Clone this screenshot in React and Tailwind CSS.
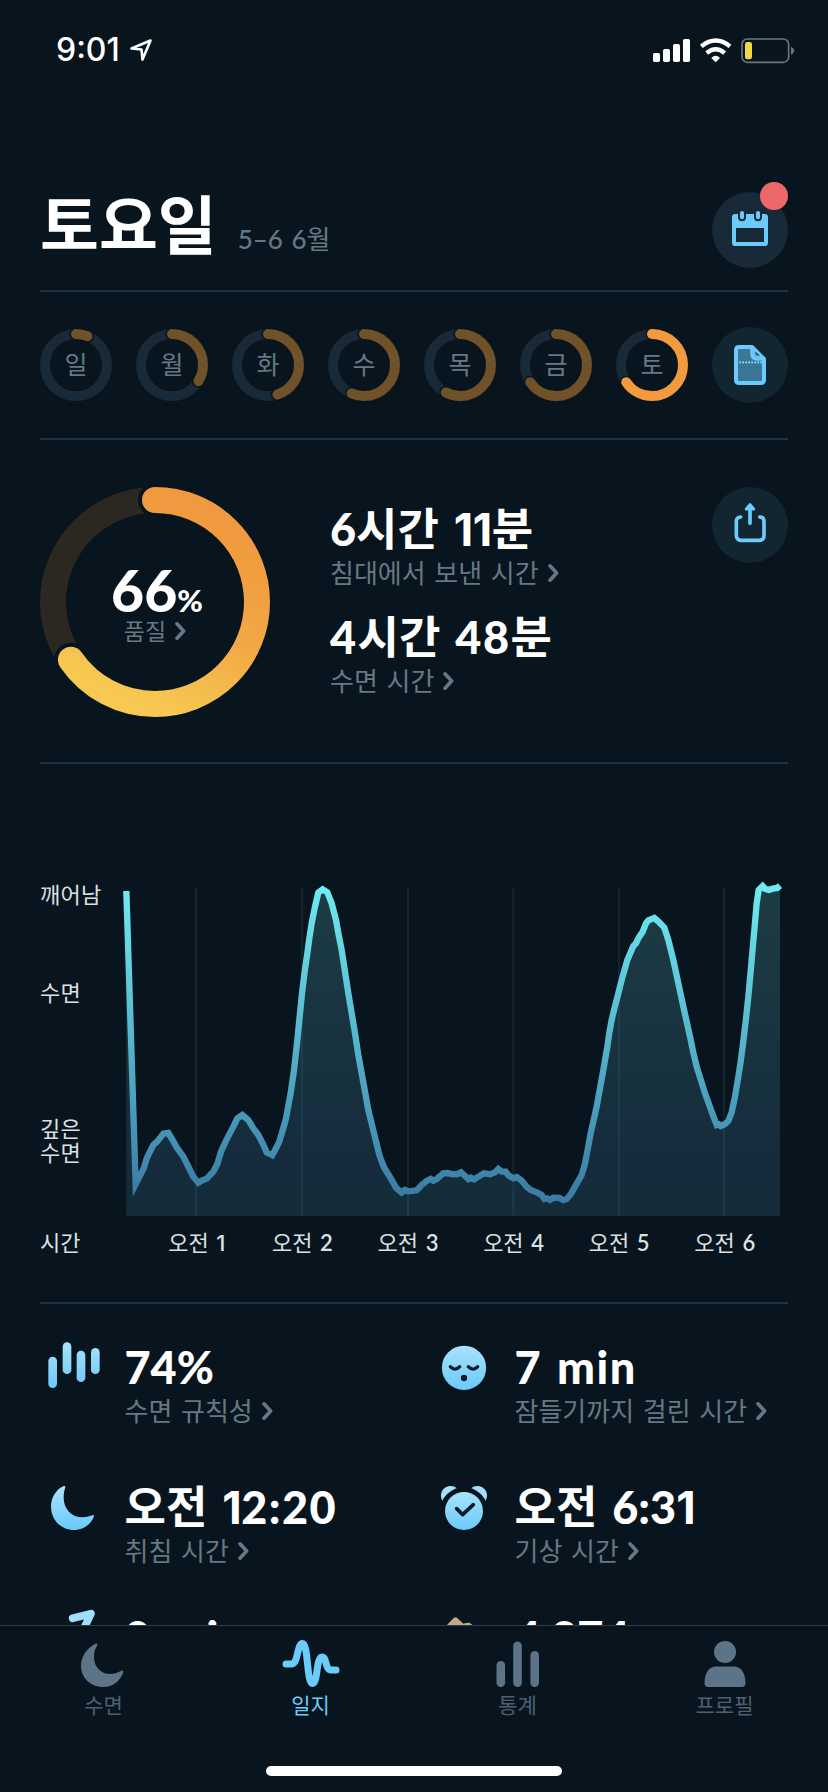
import React from 'react';

const CURVE =
  '319,93 347,972 371,925 381,893 400,855 412,844 430,821 445,819 458,840 470,862 490,890 510,930 520,950 535,968 545,962 560,956 580,935 592,912 603,875 620,838 640,800 652,775 667,765 685,780 700,805 715,825 728,850 740,877 757,885 768,865 778,845 797,780 812,700 822,630 830,560 838,480 846,400 854,335 862,280 868,235 875,190 885,140 895,98 908,88 922,97 935,130 948,180 956,225 965,270 975,335 985,400 995,460 1005,520 1015,585 1025,640 1035,695 1045,750 1062,820 1078,885 1092,922 1108,948 1118,965 1128,983 1145,998 1155,990 ' +
  '1165,994 1190,991 1205,975 1220,963 1232,957 1240,962 1250,957 1270,940 1282,939 1295,942 1310,943 1323,937 1333,946 1345,957 1352,953 1362,958 1375,950 1392,940 1410,943 1425,937 1435,927 1445,935 1457,935 1465,946 1480,955 1490,951 1505,962 1520,980 1532,990 1550,997 1565,1005 1573,1017 1582,1015 1590,1020 1600,1013 1618,1014 1630,1020 1640,1017 1652,1003 1665,980 1685,945 1694,915 1700,885 1712,820 1721,780 1730,740 1740,685 1750,630 1762,560 1768,518 1775,480 1782,450 1790,420 1805,360 1822,300 1840,258 1848,250 1855,235 1868,215 1878,190 1885,181 1903,174 1917,186 1933,203 1945,240 1960,300 1975,370 1990,440 2010,530 2020,578 2030,620 2042,658 2055,700 2075,755 2090,795 2096,793 2102,798 2115,792 2125,783 2135,757 2145,710 2155,650 2162,605 2168,560 2177,485 2185,410 2195,300 2203,210 2210,130 2216,90 2228,78 2236,87 2247,90 2258,86 2272,84 2280,77';

function Ring({ size, stroke, gap, value, color, track, children }) {
  const r = (size - stroke) / 2;
  const c = 2 * Math.PI * r;
  const mid = size / 2;
  const arc = {
    cx: mid,
    cy: mid,
    r,
    fill: 'none',
    strokeLinecap: 'round',
    strokeDasharray: `${(c * value) / 100} ${c}`,
    transform: `rotate(-90 ${mid} ${mid})`,
  };
  return (
    <div className="grid shrink-0 place-items-center">
      <svg width={size} height={size} className="col-start-1 row-start-1 overflow-visible">
        <defs>
          {/* Runs in the arc's rotated frame: +x points up, +y points right. */}
          <linearGradient id="warm" gradientUnits="userSpaceOnUse" x1="210" y1="145" x2="35" y2="60">
            <stop offset="0" stopColor="#f1993e" />
            <stop offset="0.5" stopColor="#f2a845" />
            <stop offset="1" stopColor="#f7c952" />
          </linearGradient>
        </defs>
        <circle cx={mid} cy={mid} r={r} fill="none" stroke={track} strokeWidth={stroke} />
        <circle {...arc} stroke="#08151e" strokeWidth={stroke + gap * 2} />
        <circle {...arc} stroke={color} strokeWidth={stroke} />
      </svg>
      <div className="col-start-1 row-start-1">{children}</div>
    </div>
  );
}

function Chevron() {
  return (
    <svg width="11" height="20" viewBox="0 0 11 20" className="shrink-0" fill="none" stroke="#647985" strokeWidth="3.6" strokeLinecap="round" strokeLinejoin="round">
      <path d="M2 2.8 8.6 10 2 17.2" />
    </svg>
  );
}

// Latin runs are set heavier than Hangul, and "1" takes a face without a foot.
function Value({ text, wide }) {
  return text.split(/(1+|[^가-힣\s1]+)/).filter(Boolean).map((run, i) => {
    if (run[0] === '1') return <span key={i} className="font-['Inter'] font-bold tracking-[-0.5px]">{run}</span>;
    if (/[가-힣\s]/.test(run)) return <span key={i} className="font-bold">{run}</span>;
    return <span key={i} className={wide ? 'font-black tracking-[1.5px]' : 'font-black'}>{run}</span>;
  });
}

function Metric({ value, label, wide }) {
  return (
    <div>
      <div className="h-[54px] text-[45px] leading-[54px] font-bold whitespace-nowrap [word-spacing:4px] text-white">
        <Value text={value} wide={wide} />
      </div>
      <div className="mt-px flex items-center gap-[9px] text-[26px] leading-8 whitespace-nowrap [word-spacing:2px] text-[#647985]">
        <span>{label}</span>
        {label && <Chevron />}
      </div>
    </div>
  );
}

const cool = 'url(#cool)';

function StatIcon({ children, box }) {
  return (
    <svg width="60" height="60" viewBox={box} className="shrink-0">
      <defs>
        <linearGradient id="cool" x1="0" y1="0" x2="0" y2="1">
          <stop offset="0" stopColor="#a9e3fc" />
          <stop offset="1" stopColor="#6ac9f9" />
        </linearGradient>
        <linearGradient id="coolBars" gradientUnits="userSpaceOnUse" x1="0" y1="66" x2="0" y2="205">
          <stop offset="0" stopColor="#a9e3fc" />
          <stop offset="1" stopColor="#6ac9f9" />
        </linearGradient>
      </defs>
      {children}
    </svg>
  );
}

const stats = [
  {
    value: '74%',
    label: '수면 규칙성',
    icon: (
      <StatIcon box="72 48 180 180">
        <g fill="url(#coolBars)">
          <rect x="85" y="110" width="26" height="94" rx="13" />
          <rect x="128" y="67" width="26" height="95" rx="13" />
          <rect x="170" y="92" width="26" height="94" rx="13" />
          <rect x="213" y="84" width="26" height="78" rx="13" />
        </g>
      </StatIcon>
    ),
  },
  {
    value: '7 min',
    wide: true,
    label: '잠들기까지 걸린 시간',
    icon: (
      <StatIcon box="42 48 180 180">
        <circle cx="132" cy="143.500" r="66.500" fill={cool} />
        <g fill="none" stroke="#0a1b27" strokeWidth="10" strokeLinecap="round">
          <path d="M91 140q14 15 28 0M145 140q14 15 28 0" />
        </g>
        <circle cx="132" cy="174" r="9.500" fill="#0a1b27" />
      </StatIcon>
    ),
  },
  {
    value: '오전 12:20',
    wide: true,
    label: '취침 시간',
    icon: (
      <StatIcon box="72 468 180 180">
        <path fill={cool} d="M131 498C108 508 93 533 93 560C93 599 123 630 162 630C190 630 215 612 222 588C223 585 220 584 217 586C207 590 197 592 188 592C154 592 131 566 131 533C131 520 133 510 136 502C137 499 134 497 131 498Z" />
      </StatIcon>
    ),
  },
  {
    value: '오전 6:31',
    label: '기상 시간',
    icon: (
      <StatIcon box="42 468 180 180">
        <path fill="#a4e0fb" d="M67 542C60 528 62 512 75 503C87 495 102 497 110 505C93 511 76 524 67 542ZM197 542C204 528 202 512 189 503C177 495 162 497 154 505C171 511 188 524 197 542Z" />
        <circle cx="132" cy="573" r="57" fill={cool} />
        <path d="M110 566 128 584 160 554" fill="none" stroke="#0a1b27" strokeWidth="11" strokeLinecap="round" strokeLinejoin="round" />
      </StatIcon>
    ),
  },
  {
    value: '0 min',
    wide: true,
    icon: (
      <StatIcon box="72 858 180 180">
        <path d="M158 895 213 881 163 985 225 970" fill="none" stroke="#9fdffc" strokeWidth="23" strokeLinecap="round" strokeLinejoin="round" />
      </StatIcon>
    ),
  },
  {
    value: '4,874',
    icon: (
      <StatIcon box="42 858 180 180">
        <path d="M48 950 98 897Q106 887 114 896L130 911Q137 908 147 908L153 911 200 960Z" fill="#bfa98a" />
      </StatIcon>
    ),
  },
];

const days = [
  ['일', 6],
  ['월', 33.7],
  ['화', 45],
  ['수', 56.5],
  ['목', 57.5],
  ['금', 65.5],
  ['토', 65.5],
];

const grid = [528, 846, 1164, 1480, 1797, 2112];

const tabs = [
  {
    name: '수면',
    icon: <path fill="currentColor" d="M21 7C12 12 7 20 7 29C7 41 17 50 29 50C39 50 46 44 49 36C50 34 48.500 33 47 34C43 36 40 37 36 37C27 37 20 30 20 20C20 15 21 12 23 9C24 7 23 6 21 7Z" />,
  },
  {
    name: '일지',
    active: true,
    icon: <path fill="none" stroke="currentColor" strokeWidth="7" strokeLinecap="round" strokeLinejoin="round" d="M5 27H11C17 27 16 6.500 21.500 6.500C27.500 6.500 25.500 46.500 31.500 46.500C37 46.500 35 20 41 20C46 20 44 33 50 33H55" />,
  },
  {
    name: '통계',
    icon: (
      <g fill="currentColor">
        <rect x="8.500" y="24" width="8.600" height="26" rx="4.300" />
        <rect x="25.200" y="4.500" width="8.600" height="45.500" rx="4.300" />
        <rect x="42.400" y="14" width="8.600" height="36" rx="4.300" />
      </g>
    ),
  },
  {
    name: '프로필',
    icon: (
      <g fill="currentColor">
        <circle cx="30" cy="15" r="11" />
        <path d="M9.500 46C9.500 36 14 29.500 21 29.500H39C46 29.500 50.500 36 50.500 46Q50.500 50 47 50H13Q9.500 50 9.500 46Z" />
      </g>
    ),
  },
];

function StatusBar() {
  return (
    <div className="flex h-[100px] items-center justify-between pr-[33px] pl-14">
      <div className="flex items-center gap-[9px]">
        <span className="font-['Inter'] text-[32px] leading-10 font-medium">9:01</span>
        <svg width="24" height="24" viewBox="0 0 24 24" fill="none" stroke="#fff" strokeWidth="2.600" strokeLinejoin="round">
          <path d="M2.500 10.500 21.500 2.500 13.500 21.500 12.500 11.500Z" />
        </svg>
      </div>
      <svg width="142" height="28" viewBox="0 0 426 84">
        <g fill="#fff">
          <rect x="0" y="51" width="21" height="27" rx="5" />
          <rect x="30" y="39" width="21" height="39" rx="5" />
          <rect x="60" y="24" width="21" height="54" rx="5" />
          <rect x="90" y="9" width="21" height="69" rx="5" />
          <path d="M175 66Q188 53 201 66L188 79Z" />
        </g>
        <g fill="none" stroke="#fff" strokeWidth="13">
          <path d="M145 31Q188 -4 231 31" />
          <path d="M161 51Q188 29 215 51" />
        </g>
        <rect x="267" y="9" width="140" height="70" rx="16" fill="none" stroke="#6b757c" strokeWidth="5" />
        <rect x="276" y="18" width="21" height="52" rx="7" fill="#f5d848" />
        <path d="M414 32Q424 38 424 44Q424 50 414 56Z" fill="#6b757c" />
      </svg>
    </div>
  );
}

export default function App() {
  return (
    <div className="flex h-[1792px] w-[828px] flex-col overflow-hidden bg-[#08151e] font-['Lato','Noto_Sans_CJK_KR',sans-serif] text-white">
      <main className="h-[1625px] shrink-0 overflow-hidden">
        <StatusBar />

        <div className="px-10">
          <header className="flex h-[192px] items-end justify-between border-b-2 border-[#1d3140] pb-[22px]">
            <div className="flex items-baseline gap-[21px] pb-[3px]">
              <h1 className="text-[64px] leading-[80px] font-bold">토요일</h1>
              <span className="text-[26px] [word-spacing:2px] text-[#647985]">
                <span className="font-medium">5–6 6</span>월
              </span>
            </div>
            <button className="relative size-[76px] rounded-full bg-[#182937]">
              <svg width="76" height="76" viewBox="216 516 228 228">
                <path fill="#6bcbfa" fillRule="evenodd" d="M286 582H374Q384 582 384 592V668Q384 678 374 678H286Q276 678 276 668V592Q276 582 286 582ZM288 624V666H372V624Z" />
                <g stroke="#182937" strokeWidth="6" fill="#6bcbfa">
                  <rect x="297" y="570" width="18" height="31" rx="9" />
                  <rect x="345" y="570" width="18" height="31" rx="9" />
                </g>
              </svg>
              <span className="absolute -top-[10px] right-0 size-7 rounded-full bg-[#ee6769]" />
            </button>
          </header>

          <section className="flex h-[148px] items-center justify-between border-b-2 border-[#1d3140]">
            {days.map(([name, value], i) => (
              <Ring key={name} size={72} stroke={10} gap={1.500} value={value} track="#182a38" color={i === 6 ? '#f29a3d' : '#6f5229'}>
                <div className="pb-0.5 text-[25px] leading-8 text-[#647985]">{name}</div>
              </Ring>
            ))}
            <button className="size-[76px] rounded-full bg-[#122631]">
              <svg width="76" height="76" viewBox="936 81 228 228" fill="none">
                <path d="M1018 141H1056L1092 177V239Q1092 249 1082 249H1018Q1008 249 1008 239V151Q1008 141 1018 141Z" fill="#3b7897" />
                <path d="M1014 172H1086M1014 202H1086M1014 217H1086M1014 232H1086" stroke="#357190" strokeWidth="2" />
                <path d="M1018 187H1086" stroke="#a5def7" strokeWidth="5" strokeDasharray="5 4" />
                <path d="M1018 141H1056L1092 177V239Q1092 249 1082 249H1018Q1008 249 1008 239V151Q1008 141 1018 141Z" stroke="#6bcbfa" strokeWidth="12" strokeLinejoin="round" />
                <path d="M1056 143V160Q1056 177 1073 177H1092" stroke="#6bcbfa" strokeWidth="11" />
                <path d="M1064 149V160Q1064 169 1073 169H1084Z" fill="#1f536d" stroke="#6bcbfa" strokeWidth="4" />
              </svg>
            </button>
          </section>

          <section className="flex h-[324px] items-start border-b-2 border-[#1d3140] pt-[47px]">
            <Ring size={230} stroke={26} gap={4} value={65.3} track="#2b2821" color="url(#warm)">
              <div className="flex flex-col items-center pt-[7px]">
                <div className="flex items-baseline pl-1 leading-[46px] font-black">
                  <span className="text-[57px]">66</span>
                  <span className="text-[31px]">%</span>
                </div>
                <div className="-mt-[6px] flex items-center gap-[9px] text-[23px] leading-7 text-[#647985]">
                  <span>품질</span>
                  <Chevron />
                </div>
              </div>
            </Ring>
            <div className="flex grow flex-col gap-[21px] pt-[15px] pl-[60px]">
              <Metric value="6시간 11분" label="침대에서 보낸 시간" />
              <Metric value="4시간 48분" label="수면 시간" wide />
            </div>
            <button className="size-[76px] rounded-full bg-[#122631]">
              <svg width="76" height="76" viewBox="1222 81 228 228" fill="none" stroke="#6bcbfa" strokeWidth="11" strokeLinecap="round" strokeLinejoin="round">
                <path d="M1308 171Q1295 171 1295 185V226Q1295 241 1310 241H1363Q1378 241 1378 226V185Q1378 171 1365 171M1336 190V145" />
                <path d="M1336 134 1325 147H1347Z" fill="#6bcbfa" strokeWidth="9" />
              </svg>
            </button>
          </section>

          <section className="h-[540px] border-b-2 border-[#1d3140] pt-[106px] text-[22px] text-[#dde0e3]">
            <div className="flex">
              <div className="flex w-20 shrink-0 flex-col leading-6 tracking-[0.3px]">
                <span className="mt-[13px]">깨어남</span>
                <span className="mt-[74px]">수면</span>
                <span className="mt-[112px]">깊은<br />수면</span>
              </div>
              <svg width="668" height="346" viewBox="300 30 2004 1038" className="shrink-0">
                <defs>
                  <linearGradient id="trace" gradientUnits="userSpaceOnUse" x1="0" y1="90" x2="0" y2="1020">
                    <stop offset="0" stopColor="#6eeaf0" />
                    <stop offset="0.5" stopColor="#55b3cb" />
                    <stop offset="1" stopColor="#3a7ba3" />
                  </linearGradient>
                  <linearGradient id="area" gradientUnits="userSpaceOnUse" x1="0" y1="90" x2="0" y2="1068">
                    <stop offset="0" stopColor="#1c3c45" />
                    <stop offset="0.55" stopColor="#17313e" />
                    <stop offset="0.85" stopColor="#152b3c" />
                    <stop offset="1" stopColor="#142d39" />
                  </linearGradient>
                </defs>
                <g stroke="#12242f" strokeWidth="6">
                  {grid.map((x) => <path key={x} d={`M${x} 84V1068`} />)}
                </g>
                <polygon points={`${CURVE} 2280,1068 319,1068`} fill="url(#area)" />
                <g stroke="#2f7288" strokeOpacity="0.22" strokeWidth="6">
                  <path d="M528 968V1068M846 400V1068M1164 994V1068M1480 955V1068M1797 395V1068M2112 795V1068" />
                </g>
                <polyline points={CURVE} fill="none" stroke="url(#trace)" strokeWidth="19" strokeLinejoin="miter" strokeMiterlimit="10" />
              </svg>
            </div>
            <div className="mt-[15px] flex leading-6 [word-spacing:2px]">
              <span className="w-[104px]">시간</span>
              {[1, 2, 3, 4, 5, 6].map((h) => (
                <span key={h} className="w-[105.600px] text-center">
                  오전 <span className={h === 1 ? "font-['Inter'] font-medium" : 'font-semibold'}>{h}</span>
                </span>
              ))}
            </div>
          </section>

          <section className="grid grid-cols-[390px_1fr] pt-[32px]">
            {stats.map((s, i) => (
              <div key={s.value} className={i < 4 ? 'flex h-[140px]' : '-mt-[10px] flex h-[140px]'}>
                <div className="w-[84.500px] pl-1">{s.icon}</div>
                <div className="pt-[4px]">
                  <Metric value={s.value} label={s.label} wide={s.wide} />
                </div>
              </div>
            ))}
          </section>
        </div>
      </main>

      <nav className="flex grow flex-col items-center border-t border-[#313d46]">
        <div className="grid w-full grid-cols-4 pt-[11px]">
          {tabs.map((t) => (
            <div key={t.name} className={t.active ? 'flex flex-col items-center text-[#6bcbfa]' : 'flex flex-col items-center text-[#5d7387]'}>
              <svg width="60" height="54" viewBox="0 0 60 54">{t.icon}</svg>
              <span className={t.active ? 'text-[21px] leading-7' : 'text-[21px] leading-7 text-[#4c6072]'}>{t.name}</span>
            </div>
          ))}
        </div>
        <div className="mt-[47px] h-[10px] w-[296px] rounded-full bg-white" />
      </nav>
    </div>
  );
}
